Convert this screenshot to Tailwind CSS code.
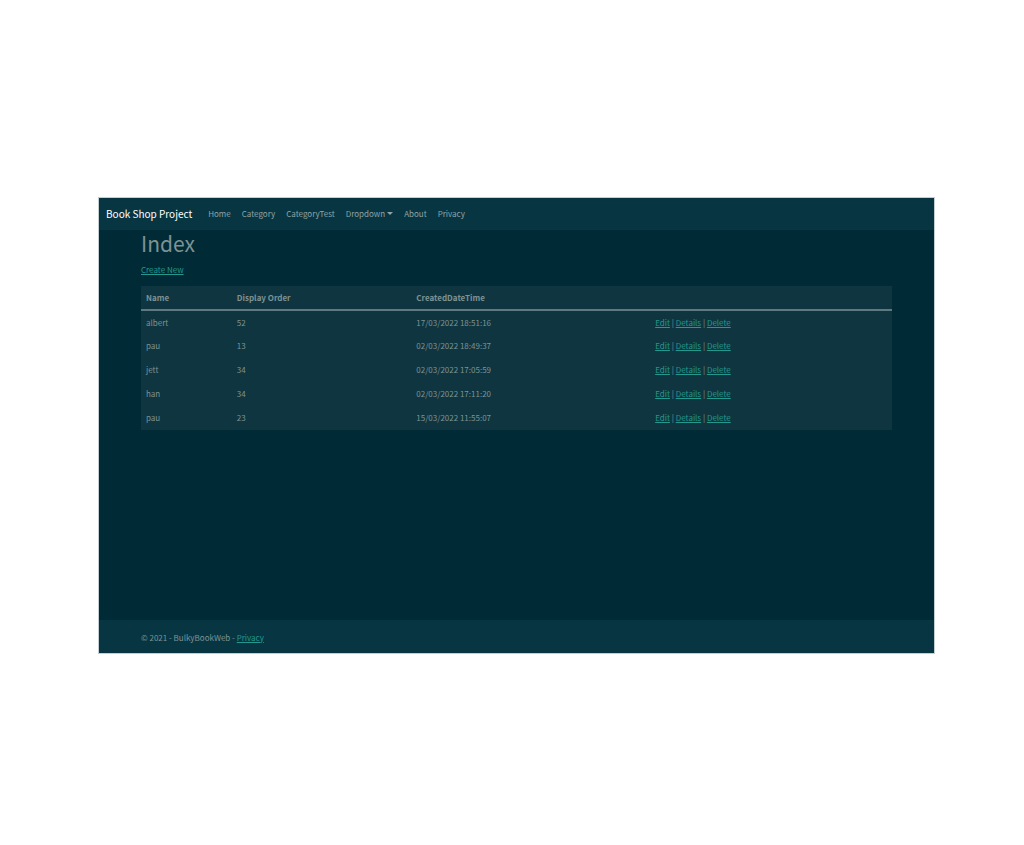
<!DOCTYPE html>
<html lang="en">
<head>
<meta charset="utf-8">
<meta name="viewport" content="width=device-width, initial-scale=1">
<title>Index - Book Shop Project</title>
<script src="https://cdn.jsdelivr.net/npm/@tailwindcss/browser@4"></script>
</head>
<body class="flex min-h-screen flex-col bg-white pt-[198px] pr-[90px] pb-48 pl-[99px] font-['Noto_Sans_CJK_SC',sans-serif] text-[8px] leading-[14px] text-[#7d9294]">
<div class="flex grow flex-col bg-[#002b36] outline outline-[#c2ced1]">
  <header class="bg-[#073642]">
    <nav class="flex h-8 items-center pl-[7px]">
      <a href="#" class="mr-4 text-[10px] whitespace-nowrap text-white">Book Shop Project</a>
      <ul class="flex gap-[11px] whitespace-nowrap text-[#8fa3a8]">
        <li><a href="#">Home</a></li>
        <li><a href="#">Category</a></li>
        <li><a href="#">CategoryTest</a></li>
        <li><button type="button" class="flex items-center gap-[2px]">Dropdown <svg class="mb-[2px] h-[3px] w-[6px]" viewBox="0 0 6 3" fill="currentColor" aria-hidden="true"><path d="M0 0h6L3 3z"/></svg></button></li>
        <li><a href="#">About</a></li>
        <li><a href="#">Privacy</a></li>
      </ul>
    </nav>
  </header>
  <main class="grow px-[42px]">
    <h1 class="text-[21px] leading-[26px]">Index</h1>
    <p class="mt-[7px]"><a href="#" class="text-[#22988f] underline">Create New</a></p>
    <table class="mt-[9px] w-full table-fixed border-collapse bg-[#0f3640] text-left">
      <colgroup><col class="w-[12.1%]"><col class="w-[23.9%]"><col class="w-[31.8%]"><col></colgroup>
      <thead>
        <tr class="h-6 border-b-2 border-[#5f7a7f]">
          <th class="px-[5px] font-bold">Name</th><th class="px-[5px] font-bold">Display Order</th><th class="px-[5px] font-bold">CreatedDateTime</th><td></td>
        </tr>
      </thead>
      <tbody>
        <tr class="h-6"><td class="px-[5px]">albert</td><td class="px-[5px]">52</td><td class="px-[5px]">17/03/2022 18:51:16</td><td class="px-[5px]"><a href="#" class="text-[#22988f] underline">Edit</a> | <a href="#" class="text-[#22988f] underline">Details</a> | <a href="#" class="text-[#22988f] underline">Delete</a></td></tr>
        <tr class="h-6"><td class="px-[5px]">pau</td><td class="px-[5px]">13</td><td class="px-[5px]">02/03/2022 18:49:37</td><td class="px-[5px]"><a href="#" class="text-[#22988f] underline">Edit</a> | <a href="#" class="text-[#22988f] underline">Details</a> | <a href="#" class="text-[#22988f] underline">Delete</a></td></tr>
        <tr class="h-6"><td class="px-[5px]">jett</td><td class="px-[5px]">34</td><td class="px-[5px]">02/03/2022 17:05:59</td><td class="px-[5px]"><a href="#" class="text-[#22988f] underline">Edit</a> | <a href="#" class="text-[#22988f] underline">Details</a> | <a href="#" class="text-[#22988f] underline">Delete</a></td></tr>
        <tr class="h-6"><td class="px-[5px]">han</td><td class="px-[5px]">34</td><td class="px-[5px]">02/03/2022 17:11:20</td><td class="px-[5px]"><a href="#" class="text-[#22988f] underline">Edit</a> | <a href="#" class="text-[#22988f] underline">Details</a> | <a href="#" class="text-[#22988f] underline">Delete</a></td></tr>
        <tr class="h-6"><td class="px-[5px]">pau</td><td class="px-[5px]">23</td><td class="px-[5px]">15/03/2022 11:55:07</td><td class="px-[5px]"><a href="#" class="text-[#22988f] underline">Edit</a> | <a href="#" class="text-[#22988f] underline">Details</a> | <a href="#" class="text-[#22988f] underline">Delete</a></td></tr>
      </tbody>
    </table>
  </main>
  <footer class="flex h-[33px] items-center bg-[#073642] px-[42px] pt-[2px]">
    <p>© 2021 - BulkyBookWeb - <a href="#" class="text-[#22988f] underline">Privacy</a></p>
  </footer>
</div>
</body>
</html>
